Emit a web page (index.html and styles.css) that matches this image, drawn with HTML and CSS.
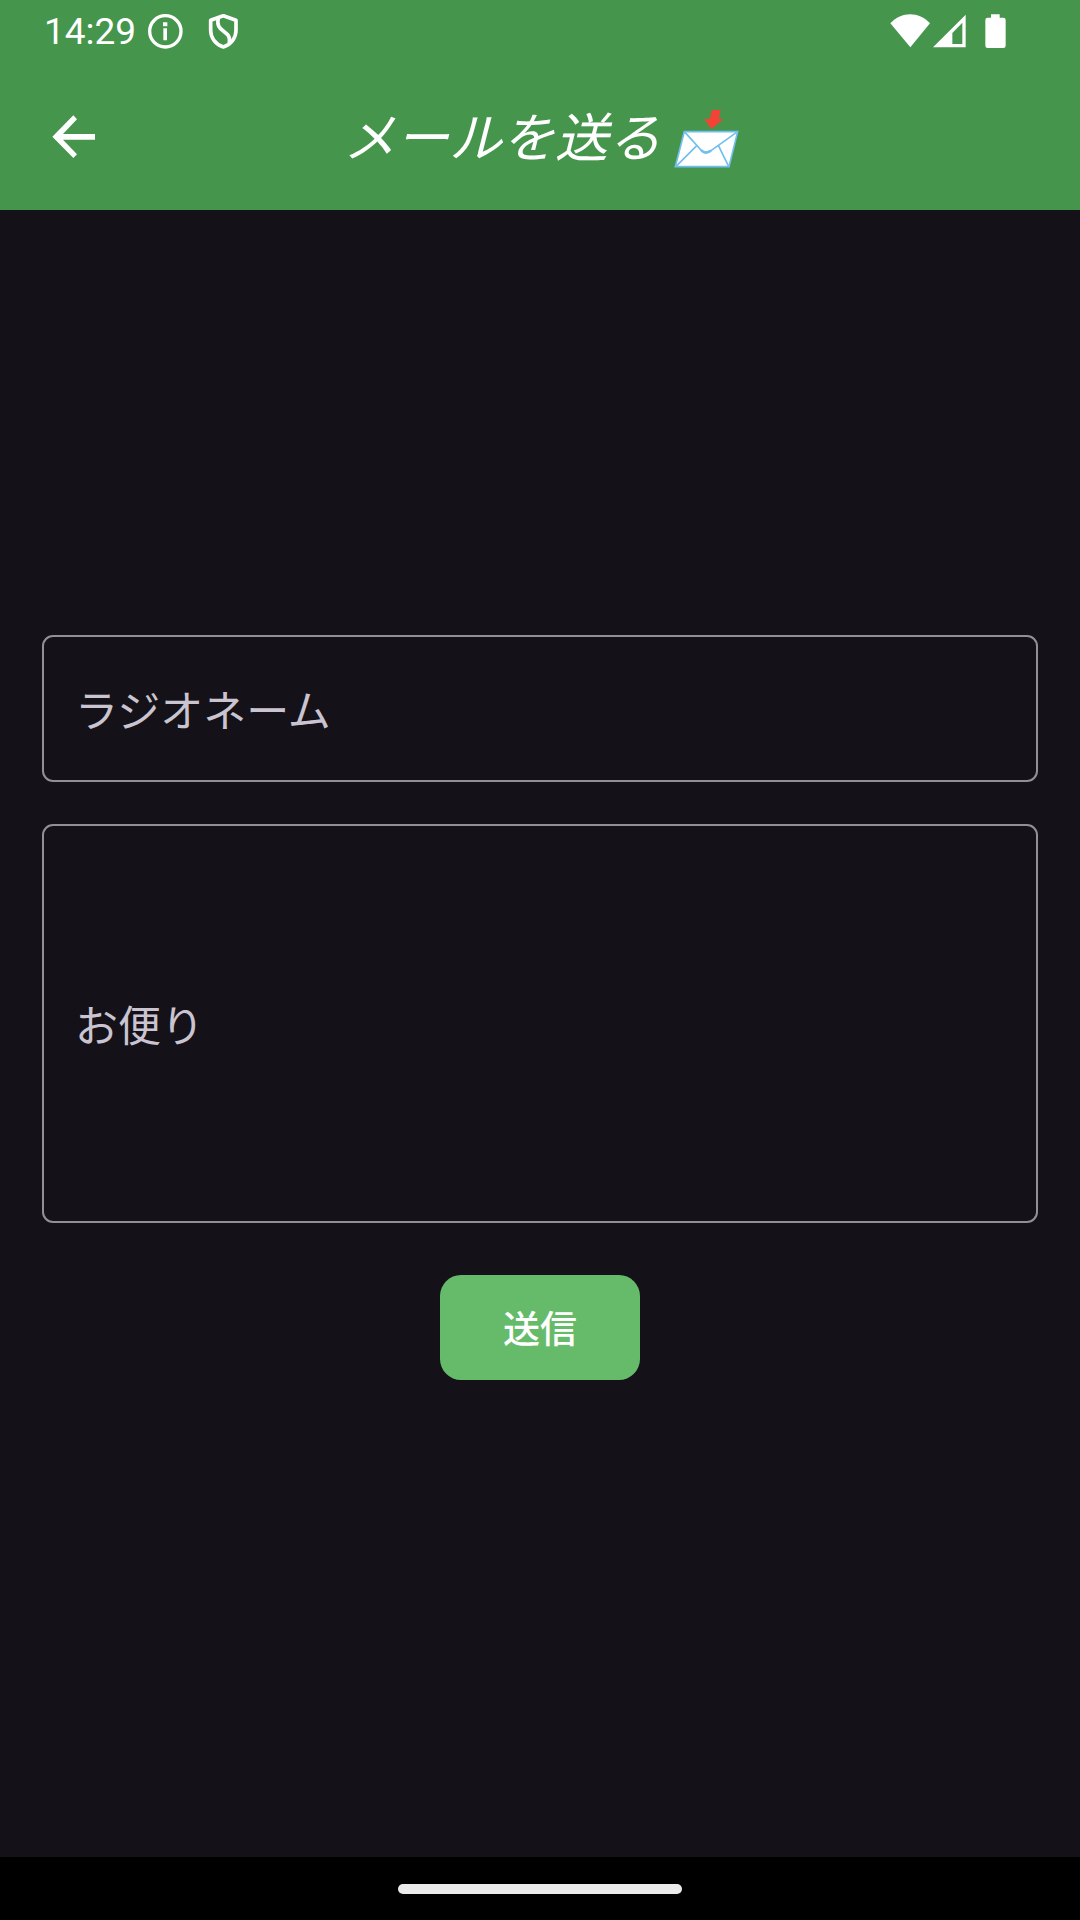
FILE: index.html
```html
<!DOCTYPE html>
<html lang="ja">
<head>
<meta charset="utf-8">
<meta name="viewport" content="width=device-width, initial-scale=1">
<title>メールを送る</title>
<link rel="stylesheet" href="styles.css">
</head>
<body>
<div class="screen">
  <div class="status-bar">
    <div class="status-left">
      <time class="clock">14:29</time>
      <svg class="icon-info" viewBox="354 42 105 105" aria-hidden="true">
        <circle cx="406" cy="94" r="47" fill="none" stroke="currentColor" stroke-width="10"/>
        <path d="M399 67h13v12h-13zM400 85h11v36h-11z" fill="currentColor"/>
      </svg>
      <svg class="icon-shield" viewBox="534 42 90 105" aria-hidden="true">
        <path d="M580 47L618 61V91C618 114 603 133 580 141C557 133 542 114 542 91V61Z" fill="none" stroke="currentColor" stroke-width="11" stroke-linejoin="round"/>
        <path d="M565 53C560 76 568 84 580 93C592 102 602 109 598 130" fill="none" stroke="currentColor" stroke-width="11"/>
      </svg>
    </div>
    <div class="status-right">
      <svg class="icon-wifi" viewBox="61 41 120 102" aria-hidden="true">
        <path d="M122 141L62 69C96 33 147 33 181 69Z" fill="currentColor"/>
      </svg>
      <svg class="icon-signal" viewBox="190 41 99 102" aria-hidden="true">
        <path fill-rule="evenodd" d="M190 141L288 43V141ZM248 98V131H278V67Z" fill="currentColor"/>
      </svg>
      <svg class="icon-battery" viewBox="344 41 63 102" aria-hidden="true">
        <path d="M362 42h26v10h11q7 0 7 7v77q0 7-7 7h-47q-7 0-7-7V59q0-7 7-7h10z" fill="currentColor"/>
      </svg>
    </div>
  </div>
  <header class="app-bar">
    <button class="back" type="button" aria-label="戻る">
      <svg class="icon-back" viewBox="66 44 129 129" aria-hidden="true">
        <path d="M195 101H99L141 57L130 45L67 109L130 173L141 162L99 118H195Z" fill="currentColor"/>
      </svg>
    </button>
    <h1 class="title">
      <span>メールを送る</span>
      <svg class="icon-envelope" viewBox="40 25 195 180" aria-hidden="true">
        <path d="M154 28H180L174 55H189L152 85L131 55H147Z" fill="#f44336"/>
        <path d="M71 93H231L205 198H44Z" fill="#fff" stroke="#70bff0" stroke-width="5"/>
        <path d="M46 197L109 134M204 197L173 134" fill="none" stroke="#70bff0" stroke-width="5"/>
        <path d="M71 93L121 148Q133 162 151 150L231 93" fill="none" stroke="#70bff0" stroke-width="5"/>
        <path d="M121 148Q133 162 151 150" fill="none" stroke="#70bff0" stroke-width="8"/>
      </svg>
    </h1>
  </header>
  <main class="content">
    <form class="mail-form">
      <div class="field">
        <input class="control" id="radio-name" type="text" placeholder=" ">
        <label class="label" for="radio-name">ラジオネーム</label>
      </div>
      <div class="field">
        <textarea class="control control-tall" id="letter" placeholder=" "></textarea>
        <label class="label" for="letter">お便り</label>
      </div>
      <button class="send" type="button">送信</button>
    </form>
  </main>
  <div class="nav-bar"><div class="handle"></div></div>
</div>
</body>
</html>
```

FILE: styles.css
```css
* {
  box-sizing: border-box;
}

body {
  margin: 0;
  background: #141218;
  color: #fff;
  font-family: Roboto, "Noto Sans CJK JP", sans-serif;
}

svg {
  display: block;
  flex: none;
}

.screen {
  display: flex;
  flex-direction: column;
  min-height: 100vh;
}

.status-bar {
  display: flex;
  justify-content: space-between;
  align-items: center;
  height: 63px;
  padding: 0 74px 0 44px;
  background: #46954c;
}

.status-left,
.status-right {
  display: flex;
  align-items: center;
}

.status-right {
  padding-bottom: 1px;
}

.clock {
  margin-right: 12px;
  font-size: 37px;
  line-height: 63px;
}

.icon-info {
  width: 35px;
  height: 35px;
  margin-right: 25px;
}

.icon-shield {
  width: 30px;
  height: 35px;
}

.icon-wifi {
  width: 40px;
  height: 34px;
  margin-right: 3px;
}

.icon-signal {
  width: 33px;
  height: 34px;
  margin-right: 19px;
}

.icon-battery {
  width: 21px;
  height: 34px;
}

.app-bar {
  display: grid;
  grid-template-columns: 147px 1fr 147px;
  align-items: center;
  height: 147px;
  background: #46954c;
}

.back {
  display: grid;
  place-items: center;
  width: 147px;
  height: 147px;
  padding: 0;
  border: 0;
  background: none;
  color: inherit;
}

.icon-back {
  width: 43px;
  height: 43px;
}

.title {
  display: flex;
  justify-content: center;
  align-items: center;
  gap: 13px;
  margin: 0;
  padding: 5px 0 0 2px;
  font-size: 53px;
  font-style: italic;
  font-weight: 400;
  line-height: 76px;
}

.icon-envelope {
  width: 65px;
  height: 60px;
}

.content {
  display: grid;
  flex: 1;
  align-items: center;
  padding: 0 42px 53px;
}

.mail-form {
  display: flex;
  flex-direction: column;
}

.field {
  display: grid;
  margin-bottom: 42px;
}

.control,
.label {
  grid-area: 1 / 1;
}

.control {
  display: block;
  width: 100%;
  height: 147px;
  padding: 32px;
  border: 2px solid #938f99;
  border-radius: 11px;
  outline: 0;
  background: none;
  color: #e6e0e9;
  font: inherit;
  font-size: 43px;
  resize: none;
}

.control-tall {
  height: 399px;
}

.label {
  align-self: center;
  padding: 8px 0 0 33px;
  color: #cac4d0;
  font-size: 43px;
  line-height: 64px;
  pointer-events: none;
}

.control:focus + .label,
.control:not(:placeholder-shown) + .label {
  visibility: hidden;
}

.send {
  align-self: center;
  width: 200px;
  height: 105px;
  margin-top: 10px;
  padding: 0;
  border: 0;
  border-radius: 21px;
  background: #66bb6a;
  color: #fff;
  font: inherit;
  font-size: 37px;
  font-weight: 500;
}

.nav-bar {
  display: grid;
  place-items: center;
  height: 63px;
  background: #000;
}

.handle {
  width: 284px;
  height: 10px;
  border-radius: 5px;
  background: #ebebeb;
}
```
